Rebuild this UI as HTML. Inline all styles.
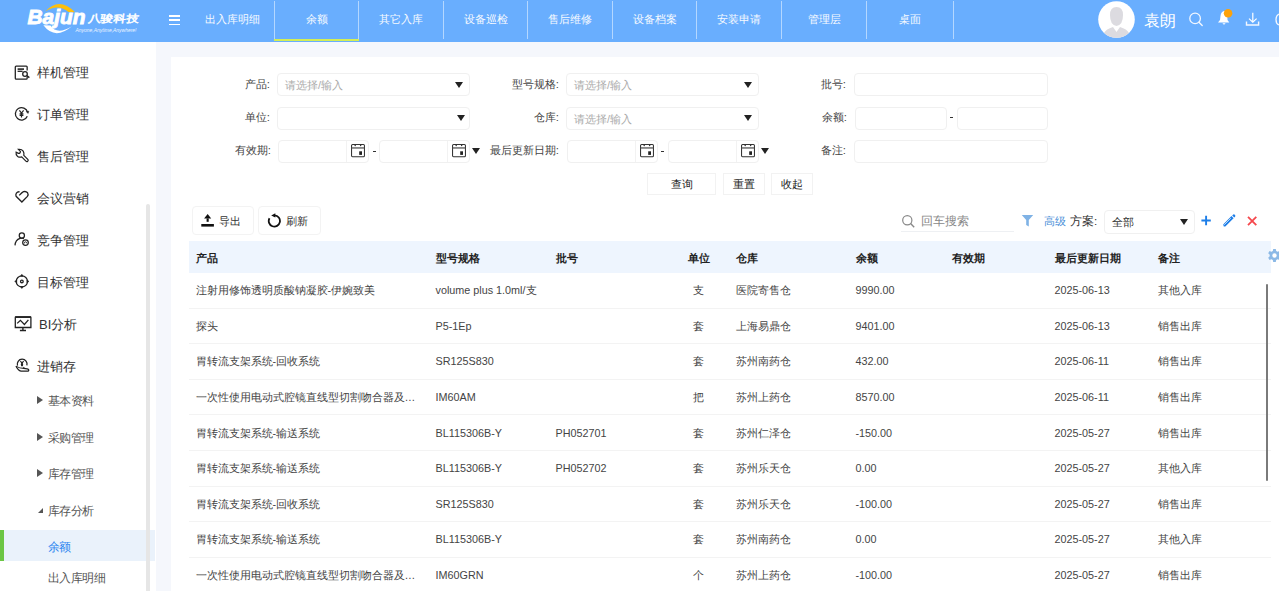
<!DOCTYPE html>
<html><head><meta charset="utf-8">
<style>
*{box-sizing:border-box;margin:0;padding:0}
html,body{width:1279px;height:591px;overflow:hidden;background:#fff;font-family:"Liberation Sans",sans-serif;color:#333}
.abs{position:absolute}
#hdr{position:absolute;left:0;top:0;width:1279px;height:42px;background:#69aefe}
.tab{position:absolute;top:0;height:40px;color:#fff;font-size:11px;line-height:38px;text-align:center;opacity:.95}
.sep{position:absolute;top:1px;width:1px;height:38px;background:rgba(255,255,255,.5)}
#side{position:absolute;left:0;top:42px;width:156px;height:549px;background:#fff}
.mi{position:absolute;left:37px;font-size:13px;color:#333;line-height:15px}
.mic{position:absolute;left:14px}
.sub{position:absolute;left:48px;font-size:12px;letter-spacing:-0.6px;color:#555;line-height:14px}
.tri{position:absolute;left:37px;width:0;height:0;border-top:4px solid transparent;border-bottom:4px solid transparent;border-left:6px solid #555}
#content{position:absolute;left:156px;top:42px;width:1123px;height:549px;background:#f5f7fc}
#card{position:absolute;left:171px;top:57px;width:1108px;height:534px;background:#fff}
.lbl{position:absolute;font-size:11.4px;color:#444;line-height:14px;text-align:right}
.inp{position:absolute;height:23px;border:1px solid #f0f0f0;border-radius:4px;background:#fff}
.ph{position:absolute;left:7px;top:4px;font-size:10.9px;color:#aaa;line-height:14px}
.arr{position:absolute;width:0;height:0;border-left:4px solid transparent;border-right:4px solid transparent;border-top:6px solid #222}
.btn{position:absolute;height:22px;border:1px solid #f2f2f2;font-size:11px;color:#222;text-align:center;line-height:20px;background:#fff}
.th{position:absolute;top:251px;font-size:10.7px;font-weight:bold;color:#222;line-height:14px}
.td{position:absolute;font-size:10.8px;color:#444;line-height:14px;white-space:nowrap}
.rowline{position:absolute;left:189px;width:1082px;height:1px;background:#f3f3f3}
</style></head><body>
<div id="hdr">
  <!-- logo -->
  <svg class="abs" style="left:0;top:0" width="150" height="42" viewBox="0 0 150 42">
    <path d="M45.3 11.6 Q59 -3.8 75 12.2 L68.5 12.1 Q58 3.2 45.3 11.6Z" fill="#fdbf0d"/>
    <path d="M43.4 25.3 Q55 40.5 72 26.2 Q57 35.5 50.5 25.5Z" fill="#fff"/>
    <text x="27.5" y="23.8" font-family="Liberation Sans" font-weight="bold" font-style="italic" font-size="20.5" fill="#fff" stroke="#fff" stroke-width="0.9" textLength="58" lengthAdjust="spacingAndGlyphs">Bajun</text>
    <text x="75.5" y="32.4" font-family="Liberation Sans" font-style="italic" font-size="5.2" fill="#eaf3ff" textLength="61" lengthAdjust="spacingAndGlyphs">Anyone,Anytime,Anywhere!</text>
  </svg>
  <div class="abs" style="left:89px;top:12.5px;font:12px/14px 'Liberation Sans',sans-serif;color:#fff;transform:scale(1.05,0.85) skewX(-6deg);transform-origin:0 0;-webkit-text-stroke:0.6px #fff">八骏科技</div>
  <!-- hamburger -->
  <div class="abs" style="left:169px;top:15px;width:11px;height:1.6px;background:#fff"></div>
  <div class="abs" style="left:169px;top:19px;width:11px;height:1.6px;background:#fff"></div>
  <div class="abs" style="left:169px;top:23.5px;width:11px;height:1.6px;background:#fff"></div>
  <div class="tab" style="left:190px;width:84px">出入库明细</div>
  <div class="sep" style="left:274px"></div>
  <div class="tab" style="left:275px;width:83px">余额</div>
  <div class="abs" style="left:274px;top:39px;width:85px;height:2px;background:#d3ee55"></div>
  <div class="sep" style="left:358px"></div>
  <div class="tab" style="left:359px;width:84px">其它入库</div>
  <div class="sep" style="left:443px"></div>
  <div class="tab" style="left:444px;width:83px">设备巡检</div>
  <div class="sep" style="left:527px"></div>
  <div class="tab" style="left:528px;width:84px">售后维修</div>
  <div class="sep" style="left:612px"></div>
  <div class="tab" style="left:613px;width:83px">设备档案</div>
  <div class="sep" style="left:696px"></div>
  <div class="tab" style="left:697px;width:84px">安装申请</div>
  <div class="sep" style="left:781px"></div>
  <div class="tab" style="left:782px;width:84px">管理层</div>
  <div class="sep" style="left:866px"></div>
  <div class="tab" style="left:867px;width:86px">桌面</div>
  <div class="sep" style="left:953px"></div>
  <!-- avatar -->
  <svg class="abs" style="left:1098px;top:1px" width="37" height="37" viewBox="0 0 37 37">
    <defs><clipPath id="cc"><circle cx="18.5" cy="18.5" r="18.3"/></clipPath></defs>
    <circle cx="18.5" cy="18.5" r="18.3" fill="#fff"/>
    <g clip-path="url(#cc)">
      <path d="M12 14 Q12 6 18.5 6 Q25 6 25 14 Q25 24 18.5 25 Q12 24 12 14Z" fill="#dcdbe0"/>
      <path d="M5 40 L6 32 Q8 28 15 26 L18.5 31 L22 26 Q29 28 31 32 L32 40Z" fill="#dcdbe0"/>
    </g>
  </svg>
  <div class="abs" style="left:1144px;top:11.5px;font-size:16px;line-height:18px;color:#fff">袁朗</div>
  <!-- search -->
  <svg class="abs" style="left:1186px;top:9px" width="20" height="20" viewBox="0 0 20 20">
    <circle cx="9.1" cy="9.4" r="5.3" fill="none" stroke="#f2f7ff" stroke-width="1.3"/>
    <path d="M13 13.3 L16.2 16.4" stroke="#f2f7ff" stroke-width="1.4" stroke-linecap="round"/>
  </svg>
  <!-- bell -->
  <svg class="abs" style="left:1214px;top:6px" width="22" height="22" viewBox="0 0 22 22">
    <path d="M11 5 Q7 5 6.5 10 L6 14 L4 16.5 L15.3 16.5 L13.5 14 L13.3 10 Q13 5 11 5Z" fill="#fff"/>
    <path d="M8.5 17.3 L11.5 17.3 Q11 18.6 10 18.6 Q9 18.6 8.5 17.3Z" fill="#fff"/>
    <circle cx="14.1" cy="7.3" r="4.3" fill="#fca20a"/>
  </svg>
  <!-- download -->
  <svg class="abs" style="left:1244px;top:10px" width="18" height="18" viewBox="0 0 18 18">
    <path d="M8.8 2.8 L8.8 12" stroke="#fff" stroke-width="1.2" fill="none"/>
    <path d="M5 8.6 L8.8 12.2 L12.6 8.6" stroke="#fff" stroke-width="1.2" fill="none"/>
    <path d="M2.5 11.6 L2.5 15 L14.6 15 L14.6 11.6" stroke="#f2f7ff" stroke-width="1.4" fill="none"/>
  </svg>
  <svg class="abs" style="left:1270px;top:10px" width="9" height="18" viewBox="0 0 9 18">
    <path d="M9 4 Q6 5.2 6 9.5 Q6 13.8 9 15" stroke="#f2f7ff" stroke-width="1.3" fill="none"/>
  </svg>
</div>

<div id="side">

  <svg class="abs" style="left:10px;top:18px" width="25" height="25" viewBox="0 0 25 25" fill="none" stroke="#222" stroke-width="1.3">
    <path d="M17.15 10.4 V7 Q17.15 6.15 16.3 6.15 H6.15 Q5.3 6.15 5.3 7 V18.2 Q5.3 19.05 6.15 19.05 H16.3 Q17.15 19.05 17.15 18.2 V17"/>
    <path d="M7.6 9.1 H14" stroke-width="1.6"/><path d="M7.6 11.3 H12.6"/>
    <circle cx="15" cy="14" r="2.3"/><path d="M16.7 15.7 L19.4 17.6" stroke-width="1.5"/>
  </svg>
  <svg class="abs" style="left:10px;top:60px" width="25" height="25" viewBox="0 0 25 25" fill="none" stroke="#222" stroke-width="1.3">
    <path d="M17.3 14.2 A6.2 6.2 0 1 1 17.6 10.4"/>
    <path d="M16.4 9.6 L18.8 9.2 L18 11.4Z" fill="#222" stroke-width="0.6"/>
    <path d="M9.4 8.3 L11.5 11 L13.6 8.3 M11.5 11 V15.6 M9.6 11.9 H13.4 M9.6 13.3 H13.4" stroke-width="1.2"/>
  </svg>
  <svg class="abs" style="left:10px;top:102px" width="25" height="25" viewBox="0 0 25 25" fill="none" stroke="#222" stroke-width="1.2">
    <path d="M8.3 5.3 Q11.6 4.9 13.2 7.1 Q14.3 9 13.8 11.3 L18 15.5 Q18.6 16.6 17.6 17.4 Q16.7 18 15.9 17.2 L11.7 12.9 Q9.6 13.6 7.6 12.4 Q5.6 11 6.1 8.1 L8.4 9.3 Q10.3 9.6 10.4 7.4 Z"/>
  </svg>
  <svg class="abs" style="left:10px;top:144px" width="25" height="25" viewBox="0 0 25 25" fill="none" stroke="#222" stroke-width="1.3">
    <path d="M9.6 5.8 Q7.6 5.5 6.4 7.1 Q5.4 8.7 6.1 10.3 L11.9 16 L17.4 10.4 Q18.7 8.5 17.6 6.8 Q16 5 13.5 5.7 Q12.2 6.3 9.2 9.4"/>
  </svg>
  <svg class="abs" style="left:10px;top:186px" width="25" height="25" viewBox="0 0 25 25" fill="none" stroke="#222" stroke-width="1.25">
    <circle cx="11.85" cy="7.5" r="2.6"/>
    <path d="M10 10.4 Q5.3 12 5 17.4"/><path d="M9.6 10.3 H14"/>
    <circle cx="15.5" cy="14.6" r="2.8"/>
    <path d="M14.3 15.4 Q14.3 13.8 15.5 13.8 Q16.7 13.8 16.6 15.2" stroke-width="0.9"/>
  </svg>
  <svg class="abs" style="left:10px;top:228px" width="25" height="25" viewBox="0 0 25 25" fill="none" stroke="#222" stroke-width="1.3">
    <circle cx="11.85" cy="11.4" r="5.6"/>
    <circle cx="11.85" cy="11.4" r="1.35"/>
    <path d="M11.85 4.3 L13.2 6.3 L10.5 6.3Z M11.85 18.5 L13.2 16.5 L10.5 16.5Z M4.7 11.4 L6.7 10.05 L6.7 12.75Z M19 11.4 L17 10.05 L17 12.75Z" fill="#222" stroke-width="0.6"/>
  </svg>
  <svg class="abs" style="left:10px;top:270px" width="25" height="25" viewBox="0 0 25 25" fill="none" stroke="#222" stroke-width="1.3">
    <path d="M5.3 15.5 V5.4 Q5.3 4.9 5.8 4.9 H20.4 Q20.9 4.9 20.9 5.4 V15.5 Z" />
    <path d="M5.3 5.1 H20.9" stroke-width="1.7"/>
    <path d="M7.2 11.4 L10.4 8.3 L14.4 12.5 L18.4 7.8"/>
    <path d="M12.9 15.8 V18.2 M9.9 18.5 H16" stroke-width="1.4"/>
  </svg>
  <svg class="abs" style="left:10px;top:312px" width="25" height="25" viewBox="0 0 25 25" fill="none" stroke="#222" stroke-width="1.3">
    <path d="M7.5 11.6 A4.9 4.9 0 1 1 16.9 11.4"/>
    <path d="M10.4 7.2 L12 9.2 L13.6 7.2" stroke-width="1.1"/>
    <ellipse cx="12" cy="10.6" rx="1.15" ry="1.9" fill="#222" stroke="none"/>
    <path d="M6 12.1 Q8 16.7 11 17.2 H17.6 Q18.8 17.1 18.7 16 Q18.5 15 17.2 14.8 L13.8 14.4"/>
    <path d="M6.3 12.4 Q9.5 14.3 13.8 14.4 Q14.3 13.7 13.4 13.2" stroke-width="1.1"/>
  </svg>
  <div class="mi" style="top:23px">样机管理</div>
  <div class="mi" style="top:65px">订单管理</div>
  <div class="mi" style="top:107px">售后管理</div>
  <div class="mi" style="top:149px">会议营销</div>
  <div class="mi" style="top:191px">竞争管理</div>
  <div class="mi" style="top:233px">目标管理</div>
  <div class="mi" style="top:275px;left:39px">BI分析</div>
  <div class="mi" style="top:317px">进销存</div>
  <div class="tri" style="top:354px"></div><div class="sub" style="top:352px">基本资料</div>
  <div class="tri" style="top:391px"></div><div class="sub" style="top:389px">采购管理</div>
  <div class="tri" style="top:427px"></div><div class="sub" style="top:425px">库存管理</div>
  <div class="abs" style="left:37.5px;top:465.5px;width:0;height:0;border-left:5.5px solid transparent;border-bottom:5.5px solid #555"></div><div class="sub" style="top:462px">库存分析</div>
  <div class="abs" style="left:0;top:488px;width:155px;height:31px;background:#eaf2fb"></div>
  <div class="abs" style="left:0;top:488px;width:4px;height:31px;background:#6cc644"></div>
  <div class="sub" style="top:498px;color:#2f86f0">余额</div>
  <div class="sub" style="top:529px">出入库明细</div>
  <div class="abs" style="left:146px;top:162px;width:4px;height:400px;border-radius:2px;background:#e6e6e6"></div>
</div>
<div id="content"></div>
<div id="card"></div>
<div class="lbl" style="left:199px;top:77px;width:71px">产品:</div>
<div class="inp" style="left:277px;top:73px;width:193px"><div class="ph">请选择/输入</div></div>
<div class="arr" style="left:455px;top:81.5px"></div>
<div class="lbl" style="left:479px;top:77px;width:80px">型号规格:</div>
<div class="inp" style="left:566px;top:73px;width:193px"><div class="ph">请选择/输入</div></div>
<div class="arr" style="left:744px;top:81.5px"></div>
<div class="lbl" style="left:779px;top:77px;width:67px">批号:</div>
<div class="inp" style="left:853.5px;top:73px;width:194px"></div>

<div class="lbl" style="left:199px;top:110px;width:71px">单位:</div>
<div class="inp" style="left:277px;top:106.5px;width:193px"></div>
<div class="arr" style="left:457px;top:115px"></div>
<div class="lbl" style="left:479px;top:110px;width:80px">仓库:</div>
<div class="inp" style="left:566px;top:106.5px;width:193px"><div class="ph">请选择/输入</div></div>
<div class="arr" style="left:744px;top:115px"></div>
<div class="lbl" style="left:779px;top:110px;width:68px">余额:</div>
<div class="inp" style="left:854.5px;top:106.5px;width:92px"></div>
<div class="abs" style="left:950px;top:117px;width:3px;height:1px;background:#333"></div>
<div class="inp" style="left:956.5px;top:106.5px;width:91px"></div>

<div class="lbl" style="left:199px;top:143px;width:72px">有效期:</div>
<div class="inp" style="left:278px;top:139.5px;width:91px"></div><div class="abs" style="left:346px;top:140.5px;width:1px;height:21px;background:#f2f2f2"></div><svg class="abs" style="left:351px;top:143.5px" width="14" height="14" viewBox="0 0 14 14" fill="none" stroke="#333" stroke-width="1.05"><rect x="0.55" y="0.55" width="12.9" height="12.2" rx="1"/><path d="M0.6 3.95 H13.4" stroke-width="1.3" stroke="#555"/><circle cx="4.2" cy="1.5" r="0.75" fill="#333" stroke="none"/><circle cx="9.6" cy="1.5" r="0.75" fill="#333" stroke="none"/><rect x="8.2" y="7.3" width="2.8" height="3.6" fill="#222" stroke="none"/></svg>
<div class="abs" style="left:372.5px;top:150.5px;width:3px;height:1px;background:#333"></div>
<div class="inp" style="left:379px;top:139.5px;width:91px"></div><div class="abs" style="left:447px;top:140.5px;width:1px;height:21px;background:#f2f2f2"></div><svg class="abs" style="left:452px;top:143.5px" width="14" height="14" viewBox="0 0 14 14" fill="none" stroke="#333" stroke-width="1.05"><rect x="0.55" y="0.55" width="12.9" height="12.2" rx="1"/><path d="M0.6 3.95 H13.4" stroke-width="1.3" stroke="#555"/><circle cx="4.2" cy="1.5" r="0.75" fill="#333" stroke="none"/><circle cx="9.6" cy="1.5" r="0.75" fill="#333" stroke="none"/><rect x="8.2" y="7.3" width="2.8" height="3.6" fill="#222" stroke="none"/></svg>
<div class="arr" style="left:472px;top:148px"></div>
<div class="lbl" style="left:469px;top:143px;width:90px">最后更新日期:</div>
<div class="inp" style="left:566.5px;top:139.5px;width:91px"></div><div class="abs" style="left:634.5px;top:140.5px;width:1px;height:21px;background:#f2f2f2"></div><svg class="abs" style="left:639.5px;top:143.5px" width="14" height="14" viewBox="0 0 14 14" fill="none" stroke="#333" stroke-width="1.05"><rect x="0.55" y="0.55" width="12.9" height="12.2" rx="1"/><path d="M0.6 3.95 H13.4" stroke-width="1.3" stroke="#555"/><circle cx="4.2" cy="1.5" r="0.75" fill="#333" stroke="none"/><circle cx="9.6" cy="1.5" r="0.75" fill="#333" stroke="none"/><rect x="8.2" y="7.3" width="2.8" height="3.6" fill="#222" stroke="none"/></svg>
<div class="abs" style="left:661px;top:150.5px;width:3px;height:1px;background:#333"></div>
<div class="inp" style="left:667.5px;top:139.5px;width:91px"></div><div class="abs" style="left:735.5px;top:140.5px;width:1px;height:21px;background:#f2f2f2"></div><svg class="abs" style="left:740.5px;top:143.5px" width="14" height="14" viewBox="0 0 14 14" fill="none" stroke="#333" stroke-width="1.05"><rect x="0.55" y="0.55" width="12.9" height="12.2" rx="1"/><path d="M0.6 3.95 H13.4" stroke-width="1.3" stroke="#555"/><circle cx="4.2" cy="1.5" r="0.75" fill="#333" stroke="none"/><circle cx="9.6" cy="1.5" r="0.75" fill="#333" stroke="none"/><rect x="8.2" y="7.3" width="2.8" height="3.6" fill="#222" stroke="none"/></svg>
<div class="arr" style="left:761px;top:148px"></div>
<div class="lbl" style="left:779px;top:143px;width:67px">备注:</div>
<div class="inp" style="left:853.5px;top:139.5px;width:194px"></div>

<div class="btn" style="left:647px;top:173px;width:69px">查询</div>
<div class="btn" style="left:722.5px;top:173px;width:42px">重置</div>
<div class="btn" style="left:771px;top:173px;width:42px">收起</div>


<div class="abs" style="left:191.5px;top:206px;width:62px;height:28.5px;border:1px solid #f3f3f3;border-radius:4px"></div>
<svg class="abs" style="left:200px;top:213px" width="16" height="16" viewBox="0 0 16 16"><path d="M7.65 1.1 L11.2 5.6 H4.1Z" fill="#111"/><rect x="6.6" y="5.4" width="2.1" height="3.4" fill="#111"/><rect x="1.3" y="11" width="12.6" height="2.6" fill="#111"/></svg>
<div class="td" style="left:219px;top:214px;color:#333">导出</div>
<div class="abs" style="left:257.5px;top:206px;width:63px;height:28.5px;border:1px solid #f3f3f3;border-radius:4px"></div>
<svg class="abs" style="left:266px;top:212px" width="16" height="16" viewBox="0 0 16 16" fill="none"><path d="M8.6 3.4 A5.6 5.6 0 1 1 3.5 6.2" stroke="#111" stroke-width="1.8"/><path d="M5.2 3.4 L9.3 1.3 L9.3 5.5Z" fill="#111"/></svg>
<div class="td" style="left:285.5px;top:214px;color:#333">刷新</div>

<svg class="abs" style="left:900px;top:213px" width="16" height="16" viewBox="0 0 16 16" fill="none"><circle cx="7.3" cy="7.3" r="4.6" stroke="#888" stroke-width="1.2"/><path d="M10.6 10.6 L14.2 14.2" stroke="#888" stroke-width="1.4"/></svg>
<div class="abs" style="left:921px;top:213.5px;font-size:12.4px;line-height:15px;color:#888">回车搜索</div>
<div class="abs" style="left:901px;top:231px;width:113px;height:1px;background:#eef0f3"></div>
<svg class="abs" style="left:1020px;top:213px" width="15" height="15" viewBox="0 0 15 15"><path d="M1.8 2 H13.2 L8.8 7 V13.5 L6.2 12 V7Z" fill="#7fb2e5"/></svg>
<div class="td" style="left:1043.5px;top:214px;color:#4a8fd8">高级</div>
<div class="td" style="left:1070px;top:213.5px;color:#333;font-size:11.6px">方案:</div>
<div class="inp" style="left:1103.5px;top:210px;width:91px;height:23.5px"><div class="ph" style="color:#333;top:3.5px">全部</div></div>
<div class="arr" style="left:1179.5px;top:219px"></div>
<svg class="abs" style="left:1200px;top:214px" width="13" height="13" viewBox="0 0 13 13"><path d="M6.1 1.8 V11.2 M1.4 6.5 H10.8" stroke="#1d7ee8" stroke-width="1.9"/></svg>
<svg class="abs" style="left:1221px;top:213px" width="16" height="16" viewBox="0 0 16 16"><path d="M2.8 13.5 L2.2 11.4 L10.5 3.1 L12.6 5.2 L4.3 13.5Z" fill="#1d7ee8"/><path d="M11.2 2.4 L12.3 1.5 Q12.9 1.1 13.5 1.6 L14.1 2.2 Q14.6 2.8 14.2 3.4 L13.3 4.5Z" fill="#1d7ee8"/><path d="M3.2 11.8 L9.8 5.2" stroke="#fff" stroke-width="0.7"/></svg>
<svg class="abs" style="left:1245px;top:214px" width="13" height="13" viewBox="0 0 13 13"><path d="M3 2.8 L11.3 11.2 M11.3 2.8 L3 11.2" stroke="#f5484d" stroke-width="1.8"/></svg>

<div class="abs" style="left:189px;top:241px;width:1082px;height:32px;background:#eef5fe"></div>
<div class="th" style="left:195.5px">产品</div>
<div class="th" style="left:435.5px">型号规格</div>
<div class="th" style="left:555.5px">批号</div>
<div class="th" style="left:687.5px">单位</div>
<div class="th" style="left:735.5px">仓库</div>
<div class="th" style="left:855.5px">余额</div>
<div class="th" style="left:951.5px">有效期</div>
<div class="th" style="left:1054.5px">最后更新日期</div>
<div class="th" style="left:1157.5px">备注</div>
<svg class="abs" style="left:1266px;top:248px" width="16" height="16" viewBox="0 0 16 16"><path fill="#8cb9e6" fill-rule="evenodd" d="M7.2 1 H9.8 L10.2 3 L11.6 3.8 L13.5 3.1 L14.8 5.3 L13.3 6.7 V8.3 L14.8 9.7 L13.5 11.9 L11.6 11.2 L10.2 12 L9.8 14 H7.2 L6.8 12 L5.4 11.2 L3.5 11.9 L2.2 9.7 L3.7 8.3 V6.7 L2.2 5.3 L3.5 3.1 L5.4 3.8 L6.8 3 Z M8.5 5.3 A2.2 2.2 0 1 0 8.5 9.7 A2.2 2.2 0 1 0 8.5 5.3Z"/></svg>

<div class="td" style="left:195.5px;top:283.20px">注射用修饰透明质酸钠凝胶-伊婉致美</div>
<div class="td" style="left:435.5px;top:283.20px">volume plus 1.0ml/支</div>
<div class="td" style="left:688.5px;width:20px;text-align:center;top:283.20px">支</div>
<div class="td" style="left:735.5px;top:283.20px">医院寄售仓</div>
<div class="td" style="left:855.5px;top:283.20px">9990.00</div>
<div class="td" style="left:1054.5px;top:283.20px">2025-06-13</div>
<div class="td" style="left:1157.5px;top:283.20px">其他入库</div>
<div class="rowline" style="top:307.61px"></div>
<div class="td" style="left:195.5px;top:318.81px">探头</div>
<div class="td" style="left:435.5px;top:318.81px">P5-1Ep</div>
<div class="td" style="left:688.5px;width:20px;text-align:center;top:318.81px">套</div>
<div class="td" style="left:735.5px;top:318.81px">上海易鼎仓</div>
<div class="td" style="left:855.5px;top:318.81px">9401.00</div>
<div class="td" style="left:1054.5px;top:318.81px">2025-06-13</div>
<div class="td" style="left:1157.5px;top:318.81px">销售出库</div>
<div class="rowline" style="top:343.22px"></div>
<div class="td" style="left:195.5px;top:354.42px">胃转流支架系统-回收系统</div>
<div class="td" style="left:435.5px;top:354.42px">SR125S830</div>
<div class="td" style="left:688.5px;width:20px;text-align:center;top:354.42px">套</div>
<div class="td" style="left:735.5px;top:354.42px">苏州南药仓</div>
<div class="td" style="left:855.5px;top:354.42px">432.00</div>
<div class="td" style="left:1054.5px;top:354.42px">2025-06-11</div>
<div class="td" style="left:1157.5px;top:354.42px">销售出库</div>
<div class="rowline" style="top:378.83px"></div>
<div class="td" style="left:195.5px;top:390.03px">一次性使用电动式腔镜直线型切割吻合器及…</div>
<div class="td" style="left:435.5px;top:390.03px">IM60AM</div>
<div class="td" style="left:688.5px;width:20px;text-align:center;top:390.03px">把</div>
<div class="td" style="left:735.5px;top:390.03px">苏州上药仓</div>
<div class="td" style="left:855.5px;top:390.03px">8570.00</div>
<div class="td" style="left:1054.5px;top:390.03px">2025-06-11</div>
<div class="td" style="left:1157.5px;top:390.03px">销售出库</div>
<div class="rowline" style="top:414.44px"></div>
<div class="td" style="left:195.5px;top:425.64px">胃转流支架系统-输送系统</div>
<div class="td" style="left:435.5px;top:425.64px">BL115306B-Y</div>
<div class="td" style="left:555.5px;top:425.64px">PH052701</div>
<div class="td" style="left:688.5px;width:20px;text-align:center;top:425.64px">套</div>
<div class="td" style="left:735.5px;top:425.64px">苏州仁泽仓</div>
<div class="td" style="left:855.5px;top:425.64px">-150.00</div>
<div class="td" style="left:1054.5px;top:425.64px">2025-05-27</div>
<div class="td" style="left:1157.5px;top:425.64px">销售出库</div>
<div class="rowline" style="top:450.05px"></div>
<div class="td" style="left:195.5px;top:461.25px">胃转流支架系统-输送系统</div>
<div class="td" style="left:435.5px;top:461.25px">BL115306B-Y</div>
<div class="td" style="left:555.5px;top:461.25px">PH052702</div>
<div class="td" style="left:688.5px;width:20px;text-align:center;top:461.25px">套</div>
<div class="td" style="left:735.5px;top:461.25px">苏州乐天仓</div>
<div class="td" style="left:855.5px;top:461.25px">0.00</div>
<div class="td" style="left:1054.5px;top:461.25px">2025-05-27</div>
<div class="td" style="left:1157.5px;top:461.25px">其他入库</div>
<div class="rowline" style="top:485.66px"></div>
<div class="td" style="left:195.5px;top:496.86px">胃转流支架系统-回收系统</div>
<div class="td" style="left:435.5px;top:496.86px">SR125S830</div>
<div class="td" style="left:688.5px;width:20px;text-align:center;top:496.86px">套</div>
<div class="td" style="left:735.5px;top:496.86px">苏州乐天仓</div>
<div class="td" style="left:855.5px;top:496.86px">-100.00</div>
<div class="td" style="left:1054.5px;top:496.86px">2025-05-27</div>
<div class="td" style="left:1157.5px;top:496.86px">销售出库</div>
<div class="rowline" style="top:521.27px"></div>
<div class="td" style="left:195.5px;top:532.47px">胃转流支架系统-输送系统</div>
<div class="td" style="left:435.5px;top:532.47px">BL115306B-Y</div>
<div class="td" style="left:688.5px;width:20px;text-align:center;top:532.47px">套</div>
<div class="td" style="left:735.5px;top:532.47px">苏州南药仓</div>
<div class="td" style="left:855.5px;top:532.47px">0.00</div>
<div class="td" style="left:1054.5px;top:532.47px">2025-05-27</div>
<div class="td" style="left:1157.5px;top:532.47px">其他入库</div>
<div class="rowline" style="top:556.88px"></div>
<div class="td" style="left:195.5px;top:568.08px">一次性使用电动式腔镜直线型切割吻合器及…</div>
<div class="td" style="left:435.5px;top:568.08px">IM60GRN</div>
<div class="td" style="left:688.5px;width:20px;text-align:center;top:568.08px">个</div>
<div class="td" style="left:735.5px;top:568.08px">苏州上药仓</div>
<div class="td" style="left:855.5px;top:568.08px">-100.00</div>
<div class="td" style="left:1054.5px;top:568.08px">2025-05-27</div>
<div class="td" style="left:1157.5px;top:568.08px">销售出库</div>
<div class="rowline" style="top:592.49px"></div>
<div class="abs" style="left:1266px;top:284px;width:2.4px;height:196.5px;border-radius:1.2px;background:#7a7a7a"></div>
</body></html>
